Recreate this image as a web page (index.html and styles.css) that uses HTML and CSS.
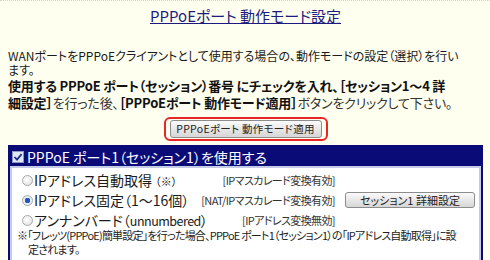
FILE: index.html
```html
<!DOCTYPE html>
<html lang="ja">
<head>
  <meta charset="UTF-8">
  <title>PPPoEポート 動作モード設定</title>
  <link rel="stylesheet" href="styles.css">
</head>
<body>
  <div class="page">
    <h1 class="page-title"><a href="#">PPPoEポート 動作モード設定</a></h1>

    <p class="intro">WANポートをPPPoEクライアントとして使用する場合の、動作モードの設定（選択）を行い<br>ます。</p>

    <p class="howto"><b>使用する PPPoE ポート（セッション）番号 にチェックを入れ、［セッション1～4 詳<br>細設定］</b>を行った後、<b>［PPPoEポート 動作モード適用］</b>ボタンをクリックして下さい。</p>

    <div class="apply-wrap">
      <span class="apply-ring"><button class="btn apply-btn" type="button">PPPoEポート 動作モード適用</button></span>
    </div>

    <div class="panel">
      <div class="panel-head">
        <svg class="check" width="12" height="12" viewBox="0 0 12 12">
          <rect x="0.5" y="0.5" width="11" height="11" fill="#dfe6f4" stroke="#8a98c4"/>
          <path d="M2.5 6 L5 8.6 L9.6 3.2" fill="none" stroke="#1c2f8a" stroke-width="1.8"/>
        </svg>
        <span>PPPoE ポート1（セッション1）を使用する</span>
      </div>
      <div class="panel-body">
        <div class="mode-row">
          <span class="radio"></span>
          <span class="mode-label">IPアドレス自動取得 <small>（※）</small></span>
          <span class="conv">[IPマスカレード変換有効]</span>
          <span></span>
        </div>
        <div class="mode-row">
          <span class="radio checked"></span>
          <span class="mode-label">IPアドレス固定（1～16個）</span>
          <span class="conv">[NAT/IPマスカレード変換有効]</span>
          <button class="btn detail-btn" type="button">セッション1 詳細設定</button>
        </div>
        <div class="mode-row">
          <span class="radio"></span>
          <span class="mode-label">アンナンバード（<span class="latin">unnumbered</span>）</span>
          <span class="conv">[IPアドレス変換無効]</span>
          <span></span>
        </div>
        <p class="note">※「フレッツ(PPPoE)簡単設定」を行った場合、PPPoE ポート1（セッション1）の「IPアドレス自動取得」に設<br>定されます。</p>
      </div>
    </div>
  </div>
</body>
</html>
```

FILE: styles.css
```css
body {
  margin: 0;
  background-color: #fffff0;
  color: #1a1a1a;
  font-family: "Noto Sans CJK JP", sans-serif;
  font-feature-settings: "palt";
}

.page {
  border-top: 1px dotted #d4d4c4;
  padding: 0 7px 0 8px;
}

.page-title {
  margin: 5px 0 0;
  font-size: 15px;
  font-weight: normal;
  line-height: 20px;
  text-align: center;
}

.page-title a {
  color: #1c1c80;
}

.intro {
  margin: 23px 0 0;
  font-size: 12px;
  line-height: 14px;
  white-space: nowrap;
}

.howto {
  margin: 0;
  font-size: 13px;
  line-height: 17px;
  letter-spacing: -0.2px;
  color: #333;
  white-space: nowrap;
}

.howto b {
  color: #111;
}

.apply-wrap {
  display: flex;
  justify-content: center;
  margin-top: 6px;
}

.apply-ring {
  display: inline-flex;
  padding: 1px 4px;
  border: 2px solid #e8262a;
  border-radius: 6px;
}

.btn {
  font-family: "Noto Sans CJK JP", sans-serif;
  font-feature-settings: "palt";
  font-size: 11px;
  color: #222;
  background: linear-gradient(#fbfbfb, #e4e4e4 60%, #d6d6d6);
  border: 1px solid #8c8c8c;
  border-radius: 3px;
  padding: 0;
  cursor: pointer;
}

.apply-btn {
  width: 152px;
  height: 18px;
  line-height: 16px;
  font-size: 10.5px;
  letter-spacing: 0.3px;
}

.panel {
  margin-top: 4px;
  border: 2px solid #0b0b78;
  background: #fff;
}

.panel-head {
  display: flex;
  align-items: center;
  gap: 3px;
  height: 19px;
  padding-left: 2px;
  background: #0b0b78;
  color: #fff;
  font-size: 14px;
}

.panel-body {
  border: 2px solid #c4cbe6;
  padding: 2px 4px 12px 10px;
  font-size: 14px;
}

.mode-row {
  display: grid;
  grid-template-columns: 11px 1fr auto 130px;
  align-items: center;
  column-gap: 1px;
  height: 20px;
  line-height: 16px;
  white-space: nowrap;
}

.mode-row .conv {
  justify-self: end;
  margin-right: 9px;
  font-size: 11px;
  letter-spacing: -0.6px;
  color: #333;
}

.mode-label small {
  font-size: 11px;
}

.mode-label .latin {
  font-size: 12.5px;
  letter-spacing: -0.5px;
}

.radio {
  width: 9px;
  height: 9px;
  border: 1px solid #a8a8a8;
  border-radius: 50%;
  background: radial-gradient(circle at 40% 40%, #fff, #dcdcdc);
}

.radio.checked {
  background: radial-gradient(circle, #2456b8 0 2.5px, #e8eef8 3px);
}

.detail-btn {
  height: 16px;
  line-height: 14px;
}

.note {
  margin: -2px 0 0 -5px;
  padding-left: 11px;
  text-indent: -11px;
  font-size: 11px;
  line-height: 14px;
  letter-spacing: -0.8px;
  color: #222;
  white-space: nowrap;
}
```
